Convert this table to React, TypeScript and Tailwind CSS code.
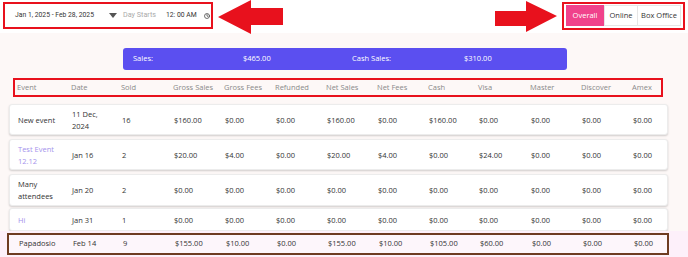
import { Clock } from 'lucide-react';

const cols = ['Event', 'Date', 'Sold', 'Gross Sales', 'Gross Fees', 'Refunded', 'Net Sales', 'Net Fees', 'Cash', 'Visa', 'Master', 'Discover', 'Amex'];

type Row = { event: string[]; link?: boolean; date: string[]; values: string[]; cls: string };

const rows: Row[] = [
  { event: ['New event'], date: ['11 Dec,', '2024'], values: ['16', '$160.00', '$0.00', '$0.00', '$160.00', '$0.00', '$160.00', '$0.00', '$0.00', '$0.00', '$0.00'], cls: 'h-[31px] mt-0' },
  { event: ['Test Event', '12.12'], link: true, date: ['Jan 16'], values: ['2', '$20.00', '$4.00', '$0.00', '$20.00', '$4.00', '$0.00', '$24.00', '$0.00', '$0.00', '$0.00'], cls: 'h-[31px] mt-[4px]' },
  { event: ['Many', 'attendees'], date: ['Jan 20'], values: ['2', '$0.00', '$0.00', '$0.00', '$0.00', '$0.00', '$0.00', '$0.00', '$0.00', '$0.00', '$0.00'], cls: 'h-[32px] mt-[4px]' },
  { event: ['Hi'], link: true, date: ['Jan 31'], values: ['1', '$0.00', '$0.00', '$0.00', '$0.00', '$0.00', '$0.00', '$0.00', '$0.00', '$0.00', '$0.00'], cls: 'h-[23px] mt-[2px]' },
];

const last = ['9', '$155.00', '$10.00', '$0.00', '$155.00', '$10.00', '$105.00', '$60.00', '$0.00', '$0.00', '$0.00'];

const grid = 'grid grid-cols-[54px_50px_52px_51px_51px_51px_51px_51px_50px_52px_51px_51px_1fr] items-center';

function LeftArrow() {
  return (
    <svg width="68" height="34" viewBox="0 0 68 34" className="shrink-0">
      <polygon points="1,17 34,0 34,8 66,8 66,25 34,25 34,34" fill="#e8111d" />
    </svg>
  );
}

function RightArrow() {
  return (
    <svg width="64" height="32" viewBox="0 0 64 32" className="shrink-0">
      <polygon points="0,10 31,10 31,0 62,15 31,31 31,25 0,25" fill="#e8111d" />
    </svg>
  );
}

export default function App() {
  return (
    <div className="w-[688px] h-[257px] overflow-hidden bg-[#fdf8f7] font-['Open_Sans',sans-serif] text-[7.5px] text-[#333]">
      <div className="h-[33px] bg-white flex items-center">
        <div className="ml-[3px] mt-[-2px] w-[210px] h-[27px] border-2 border-[#e8111d] flex items-center font-['Roboto',sans-serif] text-[6.8px] text-[#333]">
          <span className="ml-[10px] w-[88px]">Jan 1, 2025 - Feb 28, 2025</span>
          <svg width="8" height="5" viewBox="0 0 8 5" className="ml-[6px]"><polygon points="0,0 8,0 4,5" fill="#555" /></svg>
          <span className="ml-[6px] text-[#aaa] text-[7.2px]">Day Starts</span>
          <span className="ml-[10px]">12: 00 AM</span>
          <Clock size={6} strokeWidth={3} className="ml-[7px] text-[#444]" />
        </div>
        <div className="ml-[4px] mt-[1px]"><LeftArrow /></div>
        <div className="ml-auto mt-[1px]"><RightArrow /></div>
        <div className="ml-[3px] mr-[3px] mt-[-2px] w-[123px] h-[28px] border-2 border-[#e8111d] flex items-center px-[2px] text-[7.5px]">
          <div className="flex h-[21px] w-full">
            <div className="w-[38px] bg-[#f0428b] text-white flex items-center justify-center">Overall</div>
            <div className="w-[34px] border border-[#e6e6e6] text-[#333] flex items-center justify-center">Online</div>
            <div className="flex-1 border border-l-0 border-[#e6e6e6] text-[#333] flex items-center justify-center">Box Office</div>
          </div>
        </div>
      </div>

      <div className="mt-[15px] ml-[123px] w-[444px] h-[22px] rounded-[3px] bg-[#5b4ff0] text-white font-medium flex items-center">
        <span className="ml-[10px] w-[110px]">Sales:</span>
        <span className="w-[109px]">$465.00</span>
        <span className="w-[112px]">Cash Sales:</span>
        <span>$310.00</span>
      </div>

      <div className={`${grid} mt-[8px] ml-[13px] w-[650px] h-[19px] border-2 border-[#e8111d] pl-[2px] text-[#8a8a8a]`}>
        {cols.map((c) => <span key={c}>{c}</span>)}
      </div>

      <div className="mt-[7px] flex flex-col">
        {rows.map((r) => (
          <div key={r.event.join(' ')} className={`${grid} ${r.cls} ml-[9px] w-[659px] pl-[8px] bg-white rounded-[3px] border border-[#ececec] shadow-[0_1px_2px_rgba(0,0,0,0.18)] leading-[12px]`}>
            <span className={r.link ? 'text-[#a593ec]' : ''}>{r.event.map((l) => <span key={l} className="block">{l}</span>)}</span>
            <span>{r.date.map((l) => <span key={l} className="block">{l}</span>)}</span>
            {r.values.map((v, i) => <span key={i}>{v}</span>)}
          </div>
        ))}
        <div className="bg-[#fdf0fa] pt-[2px] pb-[4px]">
          <div className={`${grid} h-[22px] ml-[7px] w-[662px] pl-[10px] bg-[#fdf6fb] border-2 border-[#6e3c22]`}>
            <span>Papadosio</span>
            <span>Feb 14</span>
            {last.map((v, i) => <span key={i}>{v}</span>)}
          </div>
        </div>
      </div>
    </div>
  );
}
